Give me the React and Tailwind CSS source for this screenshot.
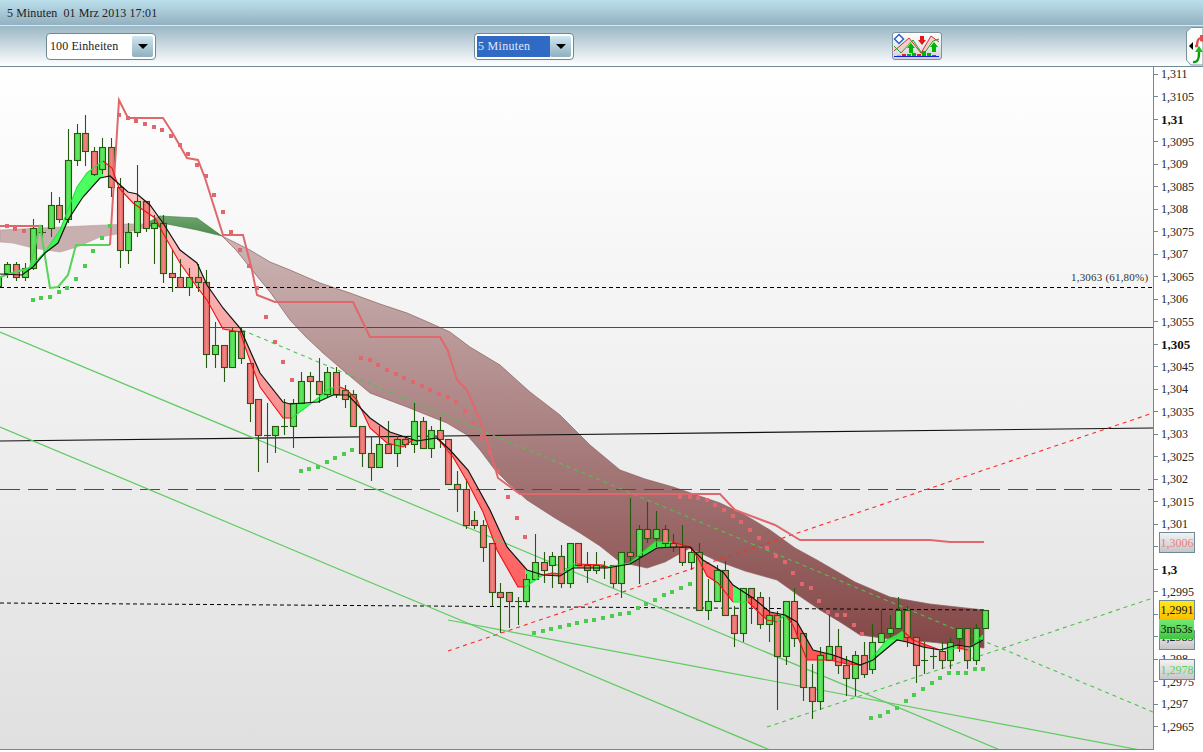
import React from "react";

const C = [
[262,264,273,278,"g"],[262,264,277,281,"r"],[263,268,277,281,"g"],[219,228,268,270,"g"],[225,232,232,237,"d"],
[192,205,228,237,"g"],[197,205,219,223,"r"],[129,160,219,223,"g"],[124,133,160,166,"g"],[115,133,151,166,"r"],
[147,151,174,176,"r"],[138,147,169,174,"g"],[138,147,187,197,"r"],[178,187,250,268,"r"],[223,232,250,264,"g"],
[165,201,232,237,"g"],[201,201,228,232,"r"],[215,223,228,264,"g"],[215,223,273,283,"r"],[250,273,277,292,"r"],
[259,277,287,287,"r"],[268,277,287,296,"g"],[264,277,282,292,"r"],[270,282,354,368,"r"],[322,345,354,368,"g"],
[345,345,367,382,"r"],[328,331,367,367,"g"],[328,331,358,364,"r"],[363,363,403,422,"r"],[399,399,435,472,"r"],
[403,435,435,463,"d"],[426,426,435,453,"g"],[399,426,426,435,"d"],[399,403,426,448,"g"],[372,381,403,403,"g"],
[372,376,381,403,"r"],[358,381,394,403,"r"],[367,372,394,398,"g"],[367,372,394,398,"r"],[385,390,399,408,"r"],
[390,394,426,426,"r"],[426,426,453,467,"r"],[436,453,467,481,"r"],[426,444,467,467,"g"],[421,444,453,453,"r"],
[436,439,453,467,"g"],[436,439,444,448,"r"],[403,421,444,453,"g"],[417,421,448,448,"r"],[426,430,448,458,"g"],
[417,430,439,448,"r"],[439,439,484,484,"r"],[471,484,489,512,"r"],[479,489,525,529,"r"],[511,520,525,529,"r"],
[520,525,547,562,"r"],[543,543,592,606,"r"],[583,592,597,633,"r"],[592,592,601,628,"r"],[597,601,601,625,"d"],
[574,579,601,606,"g"],[534,562,579,579,"g"],[552,562,570,583,"r"],[552,556,565,588,"g"],[545,556,583,588,"r"],
[543,543,583,588,"g"],[543,543,565,565,"r"],[552,565,570,583,"r"],[552,565,570,574,"g"],[561,566,566,579,"d"],
[565,565,583,588,"r"],[552,552,583,598,"g"],[498,552,556,564,"r"],[525,529,556,584,"g"],[502,529,538,543,"r"],
[511,529,538,547,"g"],[525,529,543,547,"r"],[534,543,547,552,"r"],[525,547,562,566,"r"],[547,552,562,570,"g"],
[543,552,610,610,"r"],[579,601,610,620,"g"],[565,570,601,601,"g"],[561,570,615,615,"r"],[606,615,633,647,"r"],
[588,588,633,642,"g"],[588,588,597,624,"r"],[592,597,624,629,"r"],[597,615,624,642,"g"],[611,615,656,710,"r"],
[601,601,656,665,"g"],[588,601,638,647,"r"],[633,633,687,701,"r"],[664,687,701,719,"r"],[647,655,701,710,"g"],
[615,646,660,660,"g"],[629,646,665,674,"r"],[656,665,678,696,"r"],[651,655,678,696,"g"],[642,655,674,678,"r"],
[624,642,669,674,"g"],[610,633,642,642,"g"],[615,628,633,638,"g"],[597,610,628,628,"g"],[606,610,637,647,"r"],
[637,637,665,683,"r"],[642,660,660,674,"d"],[647,656,656,669,"d"],[642,651,660,669,"r"],[638,642,660,669,"g"],
[628,628,638,652,"g"],[628,628,660,669,"r"],[624,628,660,665,"g"],[610,610,628,628,"g"],
];

const BLACK = [[0,274],[22,275],[33,267],[45,253],[58,243],[68,220],[83,197],[100,178],[110,176],[128,192],[137,194],[150,205],[163,223],[180,250],[197,263],[207,285],[223,308],[240,328],[260,373],[283,402],[290,404],[318,402],[333,395],[348,395],[370,418],[390,432],[417,441],[437,438],[450,450],[468,470],[490,510],[507,547],[527,570],[543,575],[560,576],[573,568],[607,568],[630,564],[657,548],[673,547],[690,547],[703,560],[723,572],[733,585],[753,598],[770,612],[785,615],[797,622],[813,650],[833,655],[847,660],[860,665],[873,660],[897,640],[907,642],[923,647],[940,650],[957,645],[970,647],[983,640]];

const SEG = [
["g",[[22,275],[30,267],[45,252],[60,230],[77,187],[87,173],[103,161]]],
["r",[[103,161],[112,168],[119,188],[133,203],[155,218],[163,233],[180,263],[197,287],[207,300],[223,329],[240,332],[248,355],[260,387],[283,418],[292,418]]],
["g",[[292,418],[318,398],[330,388],[340,387]]],
["r",[[340,387],[347,390],[357,400],[370,428],[387,443],[403,447],[413,440]]],
["g",[[413,440],[423,440],[437,438]]],
["r",[[437,438],[453,457],[468,483],[483,512],[497,550],[518,587],[525,587]]],
["g",[[525,587],[543,575]]],
["r",[[543,575],[552,573],[562,574]]],
["g",[[562,574],[573,564],[577,564]]],
["r",[[577,564],[603,565],[607,567]]],
["g",[[607,567],[630,563],[655,542],[672,542]]],
["r",[[672,542],[690,547],[698,558],[707,576],[718,583],[733,602]]],
["g",[[733,602],[748,602]]],
["r",[[748,602],[767,620],[777,622]]],
["g",[[777,622],[785,615]]],
["r",[[785,615],[793,625],[807,660],[820,660],[830,660],[847,664],[862,665]]],
["g",[[862,665],[870,660],[887,640],[897,635],[903,631]]],
["r",[[903,631],[913,640],[940,650]]],
["g",[[940,650],[957,648]]],
["r",[[957,648],[968,650]]],
["g",[[968,650],[983,635]]],
];

const STEP_RED = [[110,245],[119,100],[128,118],[163,118],[172,132],[187,158],[198,160],[205,178],[223,235],[243,235],[252,270],[257,295],[275,302],[353,302],[370,337],[440,337],[448,351],[457,380],[467,390],[480,420],[490,450],[498,478],[520,494],[720,494],[735,510],[775,525],[800,540],[930,540],[950,542],[984,542]];
const STEP_GREEN = [[0,277],[15,272],[30,268],[40,225],[50,288],[58,287],[68,275],[76,245],[110,245]];
const STEP_LEFT = [[0,226],[42,226]];

const RED_DOTS = [[7,226],[15,229],[24,231],[119,115],[128,118],[136,121],[145,124],[154,127],[162,130],[171,136],[180,145],[188,154],[197,165],[206,176],[214,195],[223,212],[231,232],[240,250],[249,266],[257,288],[266,317],[275,342],[283,362],[292,380],[361,358],[370,360],[378,365],[387,370],[396,374],[404,378],[413,382],[422,386],[430,390],[439,394],[448,397],[456,402],[465,411],[473,423],[482,437],[490,452],[498,471],[508,497],[517,518],[525,537],[680,497],[690,497],[698,498],[707,500],[715,505],[724,510],[733,516],[741,522],[750,530],[759,538],[767,548],[776,556],[785,562],[793,573],[802,584],[811,588],[819,601],[828,612],[837,615],[845,615],[854,625],[862,634]];
const GREEN_DOTS = [[33,300],[41,298],[50,297],[59,292],[67,288],[76,279],[85,266],[93,251],[102,238],[110,226],[301,471],[309,469],[318,467],[327,462],[335,458],[344,454],[352,450],[534,633],[543,631],[551,629],[560,627],[569,625],[577,623],[586,621],[594,620],[603,618],[612,616],[620,614],[629,613],[638,608],[646,604],[655,600],[664,595],[672,592],[681,588],[690,584],[871,718],[880,716],[888,712],[897,708],[906,701],[914,695],[923,689],[932,683],[940,678],[949,673],[958,673],[966,673],[975,669],[983,669]];

const CLOUD_L = [[0,230],[40,228],[83,226],[128,224],[145,224],[143,228],[128,232],[100,237],[77,247],[60,252],[33,248],[13,243],[0,242]];
const CLOUD_G = [[145,224],[160,216],[197,218],[222,236],[197,230],[167,224],[155,228]];
const CLOUD_TOP = [[222,236],[236,243],[250,250],[270,262],[290,270],[320,283],[350,293],[380,304],[407,313],[430,323],[450,332],[470,347],[500,365],[530,392],[560,415],[590,445],[620,470],[645,479],[673,487],[720,503],[745,515],[770,530],[795,548],[817,560],[855,582],[890,597],[930,604],[984,610]];
const CLOUD_BOT = [[984,648],[930,642],[897,640],[860,635],[840,622],[820,610],[798,595],[777,580],[745,571],[715,560],[690,548],[665,562],[647,568],[620,562],[600,546],[580,533],[555,518],[527,500],[508,483],[495,470],[480,450],[467,435],[447,423],[407,407],[370,393],[345,372],[323,353],[305,336],[290,320],[270,292],[252,270],[236,250]];

const pts = (a) => a.map((p) => p.join(",")).join(" ");
const blackAt = (x) => {
  for (let i = 1; i < BLACK.length; i++) {
    const [x0, y0] = BLACK[i - 1], [x1, y1] = BLACK[i];
    if (x <= x1) return y0 + ((y1 - y0) * (x - x0)) / (x1 - x0);
  }
  return BLACK[BLACK.length - 1][1];
};
const bandPoly = (s) => {
  const x0 = s[0][0], x1 = s[s.length - 1][0];
  const mid = BLACK.filter((p) => p[0] > x0 && p[0] < x1);
  return [...s, [x1, blackAt(x1)], ...mid.slice().reverse(), [x0, blackAt(x0)]];
};

const TICKS = [
["1,311"],["1,3105"],["1,31",1],["1,3095"],["1,309"],["1,3085"],["1,308"],["1,3075"],["1,307"],["1,3065"],["1,306"],["1,3055"],["1,305",1],["1,3045"],["1,304"],["1,3035"],["1,303"],["1,3025"],["1,302"],["1,3015"],["1,301"],["",0,"a"],["1,3",1],["1,2995"],["",0,"b"],["",0,"c"],["1,298"],["1,2975"],["1,297"],["1,2965"],
];

function Chart() {
  return (
    <svg width="1153" height="683" viewBox="0 67 1153 683" className="block">
      <defs>
        <linearGradient id="cloud" gradientUnits="userSpaceOnUse" x1="0" y1="230" x2="0" y2="650">
          <stop offset="0" stopColor="#cdb6b6" />
          <stop offset="1" stopColor="#844646" />
        </linearGradient>
        <linearGradient id="cloudG" gradientUnits="userSpaceOnUse" x1="0" y1="216" x2="0" y2="236">
          <stop offset="0" stopColor="#6fa56f" />
          <stop offset="1" stopColor="#4c8a4c" />
        </linearGradient>
        <linearGradient id="bandR" gradientUnits="userSpaceOnUse" x1="0" y1="200" x2="0" y2="620">
          <stop offset="0" stopColor="#ff8c8c" stopOpacity="0.5" />
          <stop offset="1" stopColor="#ff4f4f" stopOpacity="0.95" />
        </linearGradient>
        <linearGradient id="candG" x1="0" y1="0" x2="1" y2="0">
          <stop offset="0" stopColor="#45d845" />
          <stop offset="0.5" stopColor="#63e663" />
          <stop offset="1" stopColor="#45d845" />
        </linearGradient>
        <linearGradient id="candR" x1="0" y1="0" x2="1" y2="0">
          <stop offset="0" stopColor="#e86464" />
          <stop offset="0.5" stopColor="#f28484" />
          <stop offset="1" stopColor="#e86464" />
        </linearGradient>
      </defs>

      <polygon points={pts(CLOUD_L)} fill="#c9b0b0" stroke="#b89c9c" strokeWidth="0.6" />
      <polygon points={pts(CLOUD_G)} fill="url(#cloudG)" stroke="#3f7f3f" strokeWidth="0.6" />
      <polygon points={pts([...CLOUD_TOP, ...CLOUD_BOT])} fill="url(#cloud)" stroke="#8d5f5f" strokeWidth="0.7" />

      {SEG.map(([c, s], i) => (
        <polygon key={i} points={pts(bandPoly(s))} fill={c === "g" ? "#2dff45" : "url(#bandR)"} fillOpacity={c === "g" ? 0.85 : 1} />
      ))}

      <line x1="0" y1="287.5" x2="1153" y2="287.5" stroke="#000" strokeDasharray="4 3" />
      <line x1="0" y1="327.5" x2="1153" y2="327.5" stroke="#f00" />
      <line x1="0" y1="441" x2="1153" y2="428" stroke="#111" strokeWidth="1.1" />
      <line x1="0" y1="489.5" x2="1153" y2="489.5" stroke="#f00" strokeDasharray="20 8" />
      <line x1="0" y1="603" x2="984" y2="610" stroke="#000" strokeDasharray="4 3" />
      <line x1="448" y1="651" x2="1150" y2="414" stroke="#ff2a2a" strokeWidth="1.1" strokeDasharray="4 4" />

      <g stroke="#5fcb5f" strokeWidth="1.2" fill="none">
        <line x1="0" y1="332" x2="1000" y2="750" />
        <line x1="0" y1="427" x2="770" y2="750" />
        <line x1="448" y1="620" x2="1140" y2="750" />
      </g>
      <g stroke="#4ec24e" strokeWidth="1.1" fill="none" strokeDasharray="4 4">
        <line x1="242" y1="330" x2="1153" y2="712" />
        <line x1="767" y1="727" x2="1153" y2="598" />
      </g>

      {C.map(([hi, top, bot, lo, kind], i) => {
        const x = Math.round(7.3 + 8.65 * i) + 0.5;
        return (
          <g key={i} stroke="#25590f">
            <line x1={x} y1={hi} x2={x} y2={lo} strokeWidth="1.1" />
            {kind === "d" ? (
              <line x1={x - 3.5} y1={top + 0.5} x2={x + 3.5} y2={top + 0.5} strokeWidth="1.1" />
            ) : (
              <rect x={x - 3} y={top + 0.5} width="6" height={Math.max(bot - top, 3)} strokeWidth="1.1" fill={kind === "g" ? "url(#candG)" : "url(#candR)"} />
            )}
          </g>
        );
      })}
      <rect x="-3.5" y="276.5" width="5" height="10" fill="url(#candG)" stroke="#25590f" strokeWidth="1.1" />

      <polyline points={pts(STEP_LEFT)} fill="none" stroke="#e0686c" strokeWidth="2" />
      <polyline points={pts(STEP_GREEN)} fill="none" stroke="#55d455" strokeWidth="2" />
      <polyline points={pts(STEP_RED)} fill="none" stroke="#e0686c" strokeWidth="2" />

      {SEG.map(([c, s], i) => (
        <polyline key={i} points={pts(s)} fill="none" stroke={c === "g" ? "#1fe83a" : "#f01010"} strokeWidth="1.1" />
      ))}
      <polyline points={pts(BLACK)} fill="none" stroke="#111" strokeWidth="1.2" />

      {RED_DOTS.map(([x, y], i) => (
        <rect key={i} x={x - 2} y={y - 2} width="4" height="4" fill="#e0686c" />
      ))}
      {GREEN_DOTS.map(([x, y], i) => (
        <rect key={i} x={x - 2} y={y - 2} width="4" height="4" fill="#4ccc4c" />
      ))}
    </svg>
  );
}

function Arrow() {
  return (
    <span className="flex h-[21px] w-[21px] items-center justify-center rounded-[2px] bg-gradient-to-b from-[#cfe7f1] to-[#8fb0bf]">
      <svg width="10" height="5" viewBox="0 0 10 5"><polygon points="0,0 10,0 5,5" fill="#000" /></svg>
    </span>
  );
}

function ChartIcon() {
  return (
    <svg width="48" height="26" viewBox="1 1 48 26" className="block">
      <polygon points="2,19 17,6 29,21 39,4 47,10 47,7 41,9 31,23 21,8 9,21 2,14" fill="#f5c4c4" opacity="0.8" />
      <polygon points="2.5,7 7,2.5 11.5,7 7,11.5" fill="#fff" stroke="#2b5fd0" strokeWidth="1.5" />
      <polyline points="2,19 17,6 29,21 39,4 47,10" fill="none" stroke="#d23030" strokeWidth="1" />
      <polyline points="2,14 9,21 21,8 31,23 41,9 47,7" fill="none" stroke="#2aa02a" strokeWidth="1" />
      <polygon points="19,11 23,16 21,16 21,21 17,21 17,16 15,16" fill="#00b400" />
      <polygon points="28,4 32,4 32,8 34,8 30,13 26,8 28,8" fill="#e01818" />
      <polygon points="42,10 46,15 44,15 44,20 40,20 40,15 38,15" fill="#00b400" />
      <rect x="5" y="23" width="4" height="1" fill="#b0b0b0" />
      <rect x="10" y="22" width="4" height="2" fill="#e02020" />
      <rect x="15" y="22" width="4" height="2" fill="#00b400" />
      <rect x="20" y="21" width="4" height="3" fill="#00b400" />
      <rect x="25" y="22" width="4" height="2" fill="#e02020" />
      <rect x="30" y="19" width="4" height="5" fill="#00b400" />
      <rect x="35" y="21" width="4" height="3" fill="#00b400" />
      <rect x="40" y="23" width="4" height="1" fill="#e02020" />
      <rect x="2" y="24" width="45" height="1" fill="#1a1ae0" />
    </svg>
  );
}

function SideIcon() {
  return (
    <svg width="17" height="39" viewBox="0 0 17 39" className="block">
      <polygon points="17,0.5 5,0.5 0.5,5 0.5,33 5,38 17,38" fill="#fbfdfd" stroke="#7d929c" />
      <polygon points="7,15 3,19 7,23" fill="#000" />
      <path d="M17,11 C12,10 11,14 11,19 L9,19" fill="none" stroke="#e05050" strokeWidth="2.4" />
      <polygon points="14,8 17,8 17,15 14,14" fill="#e05050" />
      <path d="M7,35 C12,36 13,31 13,26 L13,23" fill="none" stroke="#109a10" strokeWidth="2.4" />
      <polygon points="13,19 17,25 9,25" fill="#18c018" />
    </svg>
  );
}

function Tag({ className, children }) {
  return (
    <div className={`absolute left-[5px] flex w-[36px] items-center justify-center border-[1.5px] border-[#6f8a96] text-[12px] leading-none ${className}`}>
      {children}
    </div>
  );
}

export default function App() {
  return (
    <div className="h-[752px] w-[1203px] overflow-hidden bg-white font-['Liberation_Serif',serif] text-[#222]">
      <div className="flex h-[25px] items-center bg-gradient-to-b from-[#bcdfec] to-[#93b1c0] pl-[7px] text-[12px] tracking-[0.08px] text-[#222]">
        5 Minuten&nbsp; 01 Mrz 2013 17:01
      </div>
      <div className="h-px bg-[#d8e8ee]" />
      <div className="flex h-[40px] items-start bg-gradient-to-b from-[#9ab7c5] to-white pl-[46px]">
        <div className="mt-[7px] flex h-[27px] w-[110px] items-center justify-between rounded-[4px] border border-[#6f8a96] bg-white pl-[3px] pr-[2px] text-[12px]">
          <span className="-mt-[2px] tracking-[0.1px]">100 Einheiten</span>
          <Arrow />
        </div>
        <div className="ml-[318px] mt-[7px] flex h-[27px] w-[100px] items-center rounded-[4px] border border-[#6f8a96] bg-white pl-[2px] pr-[2px] text-[12px]">
          <span className="flex h-[21px] flex-1 items-center bg-[#316ac5] pb-[2px] pl-[1px] tracking-[0.3px] text-[#dfe8f8]">5 Minuten</span>
          <Arrow />
        </div>
        <div className="ml-[318px] mt-[6px] h-[28px] w-[50px] overflow-hidden rounded-[3px] border border-[#7d929c] bg-gradient-to-b from-white to-[#cfd4d6]">
          <ChartIcon />
        </div>
        <div className="ml-auto mt-[1px]">
          <SideIcon />
        </div>
      </div>
      <div className="flex h-[684px] border-t border-[#6f8a96]">
        <div className="relative h-[683px] w-[1153px] overflow-hidden border-b border-[#6f8a96] bg-gradient-to-b from-white to-[#e0e0e0]">
          <Chart />
          <div className="absolute left-[1071px] top-[203px] text-[11px] leading-[14px] tracking-[0.2px] text-[#333]">1,3063 (61,80%)</div>
        </div>
        <div className="relative h-[683px] w-[50px] overflow-hidden border-l border-[#6f8a96] bg-white">
          <div className="-mt-[4px] flex flex-col">
            {TICKS.map(([t, b, k]) => (
              <div key={k || t} className="flex h-[22.5px] shrink-0 items-center">
                <span className="h-px w-[4px] bg-[#6f8a96]" />
                <span className={b ? "ml-[3px] text-[13px] font-bold leading-none text-[#111]" : "ml-[3px] text-[12px] leading-none text-[#222]"}>{t}</span>
              </div>
            ))}
          </div>
          <Tag className="top-[465px] h-[21px] bg-gradient-to-b from-[#f2f2f2] to-[#c6c6c6] text-[#e87f7f]">1,3006</Tag>
          <Tag className="top-[563px] h-[20px] items-start bg-gradient-to-b from-[#f0f0f0] to-[#c6c6c6] text-[#222]">1,2985</Tag>
          <Tag className="top-[533px] h-[20px] bg-gradient-to-b from-[#ffe81a] to-[#ffbe00] text-[#111]">1,2991</Tag>
          <div className="absolute left-[5px] top-[552px] flex h-[20px] w-[35px] items-center justify-center bg-gradient-to-b from-[#74ea74] to-[#3fc63f] text-[12px] leading-none text-[#111]">3m53s</div>
          <Tag className="top-[592px] h-[21px] bg-gradient-to-b from-[#f2f2f2] to-[#c8c8c8] text-[#5ad25a]">1,2978</Tag>
        </div>
      </div>
    </div>
  );
}
